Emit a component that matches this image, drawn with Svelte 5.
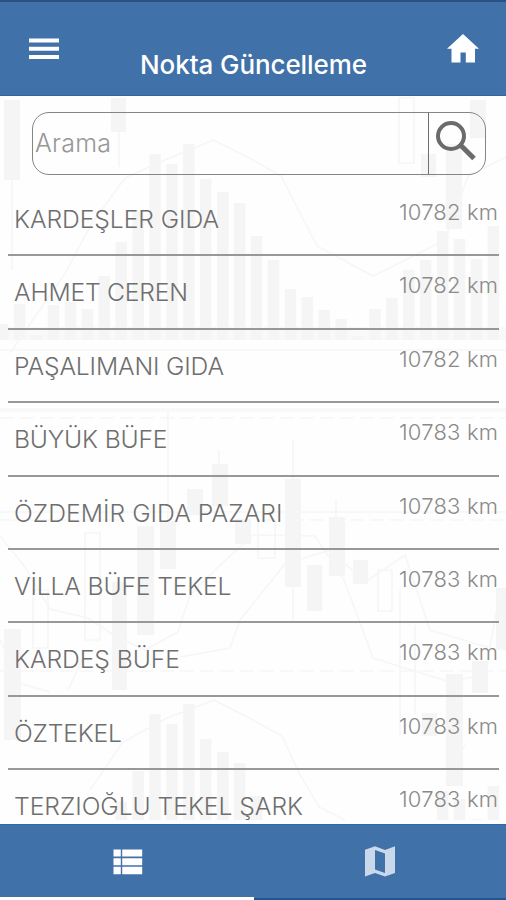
<script>
  // Points listed on the page, ordered by distance
  const points = [
    { name: 'KARDEŞLER GIDA', distance: 10782, width: 205 },
    { name: 'AHMET CEREN', distance: 10782, width: 174 },
    { name: 'PAŞALIMANI GIDA', distance: 10782, width: 210 },
    { name: 'BÜYÜK BÜFE', distance: 10783, width: 153.5 },
    { name: 'ÖZDEMİR GIDA PAZARI', distance: 10783, width: 268.5 },
    { name: 'VİLLA BÜFE TEKEL', distance: 10783, width: 217.5 },
    { name: 'KARDEŞ BÜFE', distance: 10783, width: 166 },
    { name: 'ÖZTEKEL', distance: 10783, width: 108 },
    { name: 'TERZIOĞLU TEKEL ŞARK', distance: 10783, width: 289 }
  ];

  // Tops of the volume bars in the background chart
  const volumes = [
    324, 304, 335, 305, 302, 309, 276, 242, 211, 154, 164, 144, 179, 192, 203,
    236, 260, 289, 297, 310, 319, 336, 309, 298, 270, 260, 231, 239, 259, 226
  ];

  // Candles of the background chart: x, y, width, height
  const candles = [
    [4, 100, 16, 80], [111, 98, 15, 34], [446, 144, 16, 85],
    [421, 154, 15, 23], [470, 100, 16, 38], [212, 464, 16, 42],
    [187, 489, 16, 26], [137, 526, 17, 109], [160, 521, 16, 48],
    [235, 519, 16, 25], [285, 479, 16, 108], [329, 517, 16, 59],
    [307, 565, 15, 46], [353, 560, 15, 24], [4, 629, 17, 111],
    [112, 582, 15, 108], [446, 674, 17, 112], [422, 713, 15, 23],
    [472, 661, 16, 32], [496, 588, 10, 62]
  ];

  let search = '';
  let activeTab = 'list';
</script>

<div class="app">
  <header>
    <button class="menu" aria-label="Menu">
      <svg width="30" height="22" viewBox="0 0 30 22">
        <path d="M0 2.4h30M0 10.7h30M0 19h30" stroke="#fff" stroke-width="4" />
      </svg>
    </button>
    <h1>
      <svg width="227" height="36"><text x="0" y="27" textLength="227">Nokta Güncelleme</text></svg>
    </h1>
    <button class="home" aria-label="Home">
      <svg width="32" height="29" viewBox="0 0 32 29">
        <path d="M16 0L0 14.8h4.5V28.5h9V18.4h5.3v10.1H28V14.8h4z" fill="#fff" />
      </svg>
    </button>
  </header>

  <main>
    <!-- Faint stock chart behind the list -->
    <svg class="chart" width="506" height="728" viewBox="0 96 506 728" aria-hidden="true">
      <rect class="shade" x="0" y="327" width="506" height="13" />
      <rect class="shade" x="0" y="408" width="506" height="4" />
      {#each volumes as top, i}
        <rect x={i * 16.92 - 3} y={top} width="11.5" height={340 - top} />
        {#if top + 560 < 820}
          <rect x={i * 16.92 - 3} y={top + 560} width="11.5" height={260 - top} />
        {/if}
      {/each}
      {#each candles as [x, y, width, height]}
        <rect {x} {y} {width} {height} />
      {/each}
      <g class="lines">
        <path d="M0 350H506M0 512H506M0 520H120" />
        <path d="M0 418H506M290 520H506M0 671H506" stroke-dasharray="14 6" />
        <path d="M10 353L64 275L92 223L125 178L165 160L213 140L253 160L281 176L317 246L373 276L445 240L468 176L506 157" />
        <path d="M90 790L123 742L165 719L214 700L253 720L282 736L300 775L319 807L345 820" />
        <path d="M0 536L25 567L50 609L88 618L115 636L145 650L178 632L190 595L215 570L253 535L315 536L344 580L373 658L450 682L485 674L500 592" />
        <path d="M68 690L82 660M0 640L22 684L50 692M180 657L230 648L240 620L285 564L330 550L365 582L405 555L430 630L490 648" />
        <path d="M85 533h15v107h-15zM33 590h15v58h-15zM258 520h17v38h-17zM378 570h14v41h-14zM399 98h15v65h-15zM400 590v145M415 625v90M465 745l-14 28" />
        <path d="M12 180v90M119 132v35M168 412v108M219 450v14M293 440v39M336 500v17M293 587v35" />
      </g>
    </svg>

    <section class="content">
      <form class="search" on:submit|preventDefault>
        <input type="text" placeholder="Arama" aria-label="Arama" bind:value={search} />
        <button aria-label="Search">
          <svg width="42" height="42" viewBox="0 0 42 42" fill="none" stroke="#6b6b6b">
            <circle cx="16" cy="16" r="13" stroke-width="4" />
            <path d="M25 25.5l2 1L39 38.5" stroke-width="5" />
          </svg>
        </button>
      </form>

      <ul>
        {#each points as point}
          <li>
            <svg class="name" width="310" height="36">
              <text x="0" y="26" textLength={point.width}>{point.name}</text>
            </svg>
            <svg class="distance" width="100" height="30">
              <text x="0" y="22" textLength="99">{point.distance} km</text>
            </svg>
          </li>
        {/each}
      </ul>
    </section>
  </main>

  <nav>
    <button class:active={activeTab === 'list'} aria-label="List" on:click={() => (activeTab = 'list')}>
      <svg width="30" height="26" viewBox="0 0 30 26" fill="currentColor">
        <path d="M.5 .5h7.3v7H.5zM9.2.5h20v7h-20zM.5 9.2h7.3v7H.5zM9.2 9.2h20v7h-20zM.5 17.8h7.3v7.4H.5zM9.2 17.8h20v7.4h-20z" />
      </svg>
    </button>
    <button class:active={activeTab === 'map'} aria-label="Map" on:click={() => (activeTab = 'map')}>
      <svg width="30" height="31" viewBox="0 0 30 31" fill="currentColor" fill-rule="evenodd">
        <path d="M0 3.8L10 .3L20 4L30 .3V27L20 30.5L10 27L0 30.5zM10 4V23.5L20 27V7.5z" />
      </svg>
    </button>
  </nav>
</div>

<style>
  :global(body) {
    margin: 0;
  }
  .app {
    display: flex;
    flex-direction: column;
    width: 506px;
    height: 900px;
    overflow: hidden;
    background: #fefefe;
    font-family: Inter, 'Noto Sans', sans-serif;
  }
  button {
    padding: 0;
    border: none;
    background: none;
  }
  svg {
    display: block;
  }
  /* Header bar */
  header {
    display: grid;
    grid-template-columns: 113px 1fr 113px;
    box-sizing: border-box;
    flex: none;
    height: 96px;
    border-top: 2px solid #2b5184;
    border-bottom: 1px solid #3265a1;
    background: #4071a9;
  }
  .menu {
    justify-self: start;
    align-self: start;
    margin: 36px 0 0 29px;
  }
  .home {
    justify-self: end;
    align-self: start;
    margin: 32px 27px 0 0;
  }
  h1 {
    justify-self: center;
    margin: 45px 0 0 1px;
    font-size: 26px;
    font-weight: 500;
  }
  h1 text {
    fill: #fff;
  }
  /* The chart and the content share one grid cell */
  main {
    display: grid;
    flex: none;
    height: 728px;
    overflow: hidden;
  }
  .chart,
  .content {
    grid-area: 1 / 1;
  }
  .chart rect {
    fill: #f5f5f5;
  }
  .chart .shade {
    fill: #f9f9f9;
  }
  .lines {
    fill: none;
    stroke: #f6f6f6;
    stroke-width: 1.6;
  }
  /* Search field */
  .search {
    display: flex;
    box-sizing: border-box;
    width: 454px;
    height: 63px;
    margin: 16px 0 0 32px;
    border: 1.5px solid #858585;
    border-radius: 17px;
  }
  .search input {
    box-sizing: border-box;
    width: 396px;
    padding: 0 0 1px 2px;
    border: none;
    border-right: 1px solid #6f6f6f;
    outline: none;
    background: none;
    font-family: inherit;
    font-size: 25px;
    font-weight: 350;
    letter-spacing: 0.2px;
  }
  .search input::placeholder {
    color: #979797;
    opacity: 1;
  }
  .search button {
    align-self: start;
    margin: 7px 0 0 6px;
  }
  /* Point list */
  ul {
    margin: 8px 7px 0 8px;
    padding: 0;
    list-style: none;
  }
  li {
    display: flex;
    justify-content: space-between;
    box-sizing: border-box;
    height: 73.4px;
    padding-left: 5.5px;
    border-bottom: 2px solid #989898;
  }
  .name {
    margin-top: 19px;
    font-size: 24.7px;
    font-weight: 350;
    fill: #6f6f6f;
  }
  .distance {
    margin-top: 15px;
    font-size: 22px;
    font-weight: 350;
    fill: #8a8a8a;
  }
  /* Bottom tabs */
  nav {
    display: flex;
    flex: none;
    height: 76px;
    background: #4071a9;
    box-shadow: inset 0 1px #286aae;
  }
  nav button {
    display: flex;
    flex: 1;
    justify-content: center;
    padding-top: 22px;
    border-bottom: 2px solid #205792;
    color: #c9d8ea;
  }
  nav button.active {
    padding-top: 25px;
    padding-left: 2px;
    border-bottom: 3px solid #fff;
    color: #fff;
  }
</style>
